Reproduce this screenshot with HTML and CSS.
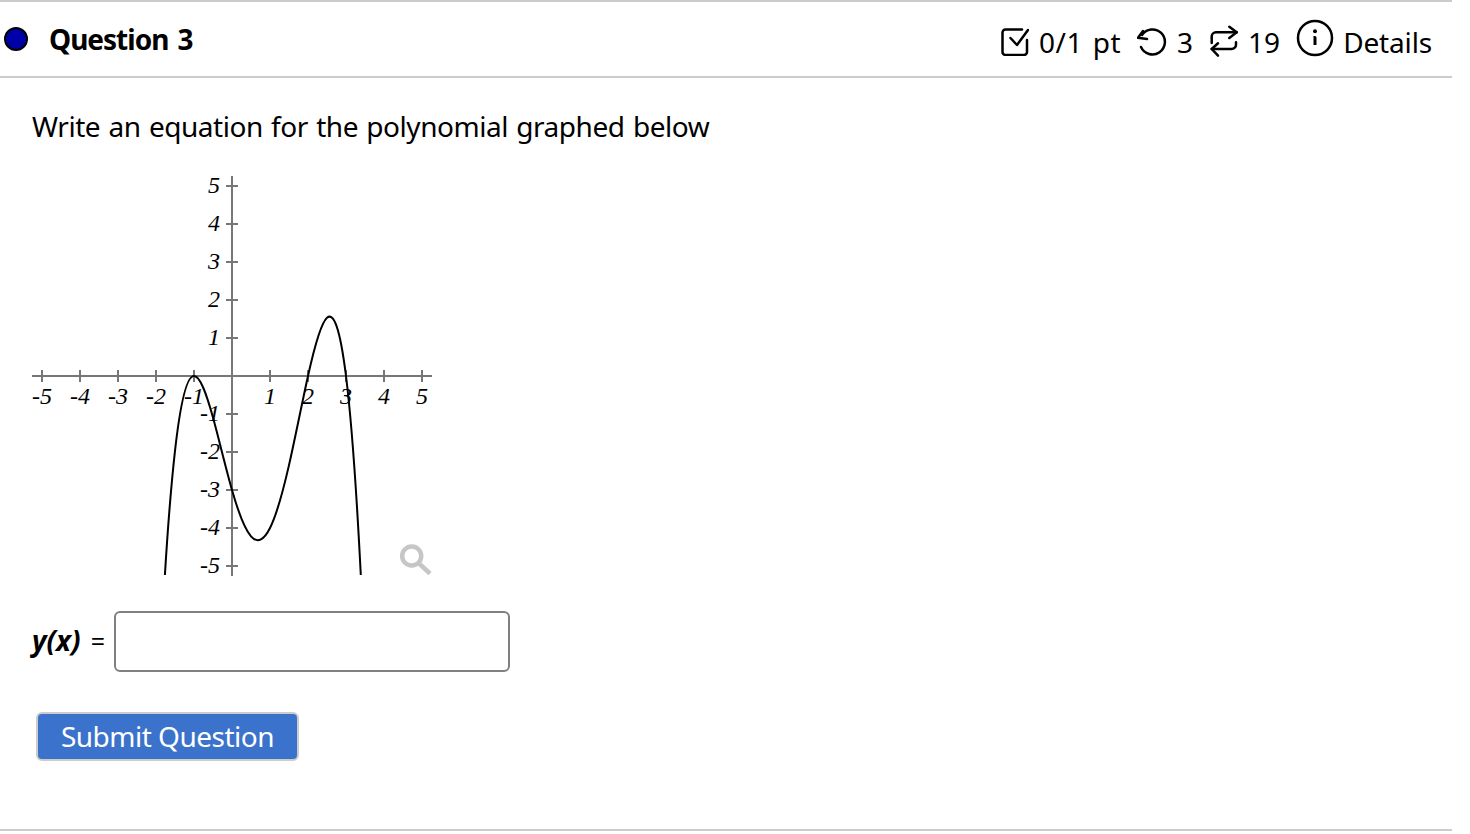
FILE: index.html
```html
<!DOCTYPE html>
<html lang="en">
<head>
    <meta charset="UTF-8">
    <meta name="viewport" content="width=device-width, initial-scale=1.0">
    <title>Question 3</title>
    <link rel="stylesheet" href="styles.css">
</head>
<body>
    <div class="question">
        <div class="question-header">
            <div class="question-title">
                <span class="status-dot"></span>
                <h2>Question 3</h2>
            </div>
            <div class="question-meta">
                <span class="meta-item score">
                    <svg class="icon" width="28" height="28" viewBox="0 0 28 28"><path d="M26 12v12a3 3 0 0 1-3 3H4.500a3 3 0 0 1-3-3V4.500a3 3 0 0 1 3-3H21"/><path d="M9.500 10l6.500 7L27 2"/></svg>
                    0/1 pt
                </span>
                <span class="meta-item">
                    <svg class="icon" width="30" height="28" viewBox="0 0 30 28"><path d="M6 3L1 9.700l9 1.300"/><path d="M5 7A12.500 12.500 0 1 1 4 19"/></svg>
                    3
                </span>
                <span class="meta-item tries">
                    <svg class="icon" width="30" height="34" viewBox="0 0 30 34"><path d="M20.300 1.700l7.400 5.600-7.400 5.700"/><path d="M27.700 7.300H7a4.300 4.300 0 0 0-4.300 4.300V18"/><path d="M9 18.300L2.700 24 9 30.700"/><path d="M2.700 24h20a4.300 4.300 0 0 0 4.300-4.300v-2.400"/></svg>
                    19
                </span>
                <span class="meta-item details">
                    <svg class="icon icon-info" width="38" height="38" viewBox="0 0 38 38"><circle cx="19" cy="19" r="17"/><path class="info-stem" d="M17.500 18.500H19V26"/><circle class="info-dot" cx="19" cy="12.300" r="2"/></svg>
                    Details
                </span>
            </div>
        </div>

        <div class="question-body">
            <p class="prompt">Write an equation for the polynomial graphed below</p>

            <svg class="graph" width="400" height="400" viewBox="0 0 400 400">
                <g class="axes">
                    <path d="M0 200H400M200 0V400"/>
                    <path d="M10 194v12M48 194v12M86 194v12M124 194v12M162 194v12M238 194v12M276 194v12M314 194v12M352 194v12M390 194v12"/>
                    <path d="M194 10h12M194 48h12M194 86h12M194 124h12M194 162h12M194 238h12M194 276h12M194 314h12M194 352h12M194 390h12"/>
                    <path d="M194 200h12M200 194v12"/>
                </g>
                <g class="labels-x">
                    <text x="10" y="228">-5</text>
                    <text x="48" y="228">-4</text>
                    <text x="86" y="228">-3</text>
                    <text x="124" y="228">-2</text>
                    <text x="162" y="228">-1</text>
                    <text x="238" y="228">1</text>
                    <text x="276" y="228">2</text>
                    <text x="314" y="228">3</text>
                    <text x="352" y="228">4</text>
                    <text x="390" y="228">5</text>
                </g>
                <g class="labels-y">
                    <text x="188" y="17">5</text>
                    <text x="188" y="55">4</text>
                    <text x="188" y="93">3</text>
                    <text x="188" y="131">2</text>
                    <text x="188" y="169">1</text>
                    <text x="188" y="245">-1</text>
                    <text x="188" y="283">-2</text>
                    <text x="188" y="321">-3</text>
                    <text x="188" y="359">-4</text>
                    <text x="188" y="397">-5</text>
                </g>
                <path class="curve" d="M132.900 399C136.270 344.100 139.630 304.700 143 274.800C149.330 218.600 155.670 200 162 200C168.330 200 174.670 218.640 181 241.600C187.330 264.560 193.670 291.830 200 314C206.330 336.170 212.670 353.180 219 360.300C225.330 367.430 231.670 364.670 238 352C244.330 339.330 250.670 316.810 257 289.100C263.330 261.390 269.670 228.500 276 200C282.330 171.500 288.670 147.340 295 141.800C301.330 136.260 307.670 149.330 314 200C318.930 239.400 323.870 302.900 328.800 399"/>
                <g class="zoom-icon">
                    <circle cx="379.700" cy="380" r="9.500"/>
                    <path d="M386.500 387L398 397.500"/>
                </g>
            </svg>

            <div class="answer-row">
                <label for="answer"><i>y(x)</i> <span class="equals">=</span></label>
                <input type="text" id="answer">
            </div>

            <button type="button" class="submit">Submit Question</button>
        </div>
    </div>
</body>
</html>
```

FILE: styles.css
```css
* {
    margin: 0;
    padding: 0;
    box-sizing: border-box;
}

body {
    font-family: "Noto Sans", Tahoma, Verdana, sans-serif;
    background: #fff;
    color: #000;
}

.question {
    width: 1452px;
    height: 831px;
    border-top: 2px solid #ccc;
    border-bottom: 2px solid #ccc;
}

.question-header {
    display: flex;
    justify-content: space-between;
    height: 76px;
    padding: 0 20px 0 4px;
    border-bottom: 2px solid #ccc;
}

.question-title {
    display: flex;
    align-items: center;
    gap: 21px;
}

.question-title h2 {
    font-size: 28px;
    font-weight: 700;
    line-height: 36px;
    letter-spacing: -1px;
    word-spacing: 3px;
}

.status-dot {
    width: 24px;
    height: 24px;
    border: 2px solid #000;
    border-radius: 50%;
    background: #0000a8;
}

.question-meta {
    display: flex;
    align-items: center;
    gap: 16px;
    font-size: 28px;
    padding-top: 6px;
}

.meta-item {
    display: flex;
    align-items: center;
    gap: 10px;
}

.score {
    word-spacing: 2px;
    letter-spacing: 0.5px;
}

.tries {
    gap: 9px;
}

.details {
    gap: 9px;
    letter-spacing: -0.15px;
}

.icon {
    fill: none;
    stroke: #000;
    stroke-width: 2.5;
    stroke-linecap: round;
    stroke-linejoin: round;
}

.icon-info {
    margin-top: -9px;
}

.info-stem {
    stroke-width: 3;
    stroke-linecap: butt;
}

.info-dot {
    fill: #000;
    stroke: none;
}

.question-body {
    padding: 0 0 0 32px;
}

.prompt {
    font-size: 28px;
    line-height: 40px;
    letter-spacing: -0.46px;
    word-spacing: 1.5px;
    margin-top: 28px;
}

.graph {
    display: block;
    margin-top: 30px;
    overflow: visible;
}

.axes path {
    fill: none;
    stroke: #777;
    stroke-width: 2;
}

.graph text {
    font-family: "Liberation Serif", "Times New Roman", serif;
    font-style: italic;
    font-size: 24px;
}

.labels-x text {
    text-anchor: middle;
}

.labels-y text {
    text-anchor: end;
}

.curve {
    fill: none;
    stroke: #000;
    stroke-width: 2;
}

.zoom-icon circle,
.zoom-icon path {
    fill: none;
    stroke: #c6c6c6;
    stroke-width: 4.5;
}

.answer-row {
    display: flex;
    align-items: center;
    gap: 10px;
    margin-top: 35px;
}

.answer-row label {
    font-size: 28px;
    font-weight: 700;
    padding-bottom: 4px;
}

.equals {
    font-size: 25px;
    font-weight: 400;
    margin-left: 3px;
}

.answer-row input {
    width: 396px;
    height: 61px;
    border: 2px solid #808080;
    border-radius: 6px;
    background: #fff;
    margin-left: -1px;
}

.submit {
    display: block;
    width: 263px;
    height: 49px;
    margin: 40px 0 0 4px;
    padding-bottom: 2px;
    background: #3b72cb;
    border: 2px solid #ccc;
    border-radius: 6px;
    color: #fff;
    font-family: inherit;
    font-size: 28px;
    letter-spacing: -0.5px;
    line-height: 40px;
}
```
